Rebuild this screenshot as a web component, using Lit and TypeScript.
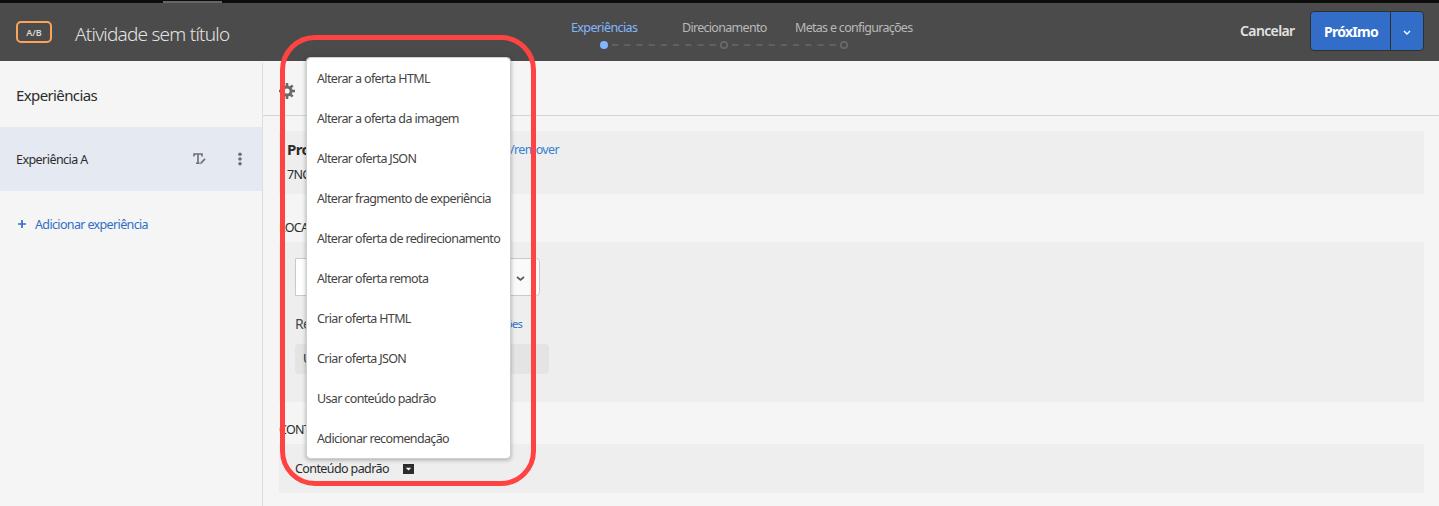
import { LitElement, html, css, svg } from "lit";
import { customElement, state } from "lit/decorators.js";

const MENU = [
  "Alterar a oferta HTML",
  "Alterar a oferta da imagem",
  "Alterar oferta JSON",
  "Alterar fragmento de experiência",
  "Alterar oferta de redirecionamento",
  "Alterar oferta remota",
  "Criar oferta HTML",
  "Criar oferta JSON",
  "Usar conteúdo padrão",
  "Adicionar recomendação",
];

const TEETH = [0, 45, 90, 135, 180, 225, 270, 315];

@customElement("app-header")
export class AppHeader extends LitElement {
  static styles = css`
    :host { display: block; height: 61px; color: #e3e3e3; background: #4b4b4b; }
    * { box-sizing: border-box; }
    .strip { height: 3px; background: #0d0d0d; padding: 1px 0 0 163px; }
    .tab { width: 59px; height: 2px; background: #666; }
    .bar { display: flex; height: 58px; align-items: flex-start; }
    .badge {
      margin: 18px 0 0 16px; width: 36px; height: 22px; border: 2px solid #f9a456; border-radius: 5px;
      font-size: 9px; font-weight: 600; line-height: 19px; text-align: center; color: #d8d8d8;
    }
    .title { margin: 17px 0 0 23px; width: 473px; font-size: 19px; font-weight: 300; line-height: 28px; letter-spacing: -0.77px; white-space: nowrap; }
    .steps { width: 380px; margin-top: 16px; }
    .labels { display: flex; font-size: 12.5px; line-height: 18px; color: #b9b9b9; margin-left: 23px; }
    .labels span { white-space: nowrap; letter-spacing: -0.7px; }
    .labels .s1 { width: 111px; color: #82b8fb; letter-spacing: -0.62px; }
    .s2 { width: 113px; }
    .track { display: block; margin: 3px 0 0 48px; }
    .cancel { margin: 18px 0 0 312px; width: 70px; font-size: 14px; font-weight: 600; line-height: 20px; letter-spacing: -0.62px; }
    .split {
      display: flex; margin-top: 8px; width: 114px; height: 40px; border: 1px solid #2f2f2f; border-radius: 4px;
      background: #326ec8; color: #fff;
    }
    .next { width: 80px; border-right: 1px solid #2f2f2f; padding-left: 13px; font-size: 14px; font-weight: 700; line-height: 40px; letter-spacing: -0.72px; }
    .more { flex: 1; display: flex; align-items: center; justify-content: center; padding-top: 3px; }
  `;
  render() {
    return html`
      <div class="strip"><div class="tab"></div></div>
      <div class="bar">
        <div class="badge">A/B</div>
        <div class="title">Atividade sem título</div>
        <div class="steps">
          <div class="labels"><span class="s1">Experiências</span><span class="s2">Direcionamento</span><span>Metas e configurações</span></div>
          <svg class="track" width="256" height="10" viewBox="0 0 256 10">
            <path d="M16 5H120M136 5H240" stroke="#696969" stroke-width="1.6" stroke-dasharray="6.2 6"/>
            <circle cx="8" cy="5" r="4" fill="#82b8fb"/>
            <circle cx="128" cy="5" r="3.2" fill="none" stroke="#696969" stroke-width="1.7"/>
            <circle cx="248" cy="5" r="3.2" fill="none" stroke="#696969" stroke-width="1.7"/>
          </svg>
        </div>
        <div class="cancel">Cancelar</div>
        <div class="split">
          <div class="next">PróxImo</div>
          <div class="more"><svg width="8" height="6" viewBox="0 0 8 6"><path d="M1 1l3 3 3-3" fill="none" stroke="#fff" stroke-width="1.4"/></svg></div>
        </div>
      </div>`;
  }
}

@customElement("app-root")
export class AppRoot extends LitElement {
  @state() private items = MENU;

  static styles = css`
    :host {
      display: block; position: relative; width: 1439px; height: 506px; overflow: hidden;
      background: #f5f5f5; color: #2c2c2c; font-family: "Noto Sans", "Open Sans", sans-serif;
    }
    * { box-sizing: border-box; }
    .body { display: flex; height: 445px; padding-top: 2px; white-space: nowrap; }
    .side { width: 263px; border-right: 1px solid #dedede; }
    h2 { margin: 0; padding: 20px 0 0 16px; height: 64px; font-size: 15px; font-weight: 400; line-height: 24px; letter-spacing: -0.62px; }
    .exp { display: flex; align-items: center; height: 64px; padding-left: 16px; background: #e5eaf2; font-size: 12.5px; letter-spacing: -0.55px; }
    .exp-name { width: 177px; }
    .exp-edit { display: block; width: 14px; margin-right: 30px; }
    .add { display: flex; align-items: center; gap: 9px; height: 66px; padding-left: 18px; color: #326ec8; font-size: 12.5px; letter-spacing: -0.64px; }
    .main { flex: 1; font-size: 12.5px; letter-spacing: -0.65px; }
    .tools { height: 53px; border-bottom: 1px solid #d5d5d5; padding: 20px 0 0 16px; }
    .content { padding: 15px 15px 0 16px; }
    .card { background: #eee; }
    .prop { height: 63px; padding: 7px 0 0 8px; }
    .row { display: flex; align-items: center; }
    .prop-head { height: 22px; }
    .prop-name { width: 223px; font-size: 15px; font-weight: 700; }
    .link { color: #3680d0; }
    .prop-id { line-height: 30px; }
    .label { height: 48px; padding-top: 25px; line-height: 18px; }
    .label-b { height: 42px; padding-top: 19px; }
    .loc { height: 160px; padding: 16px 0 0 16px; }
    .select { display: flex; width: 245px; height: 38px; border: 1px solid #c9c9c9; border-radius: 0 4px 4px 0; background: #fff; }
    .select-text { width: 207px; }
    .select-btn { flex: 1; display: flex; align-items: center; justify-content: center; background: #fafafa; border-radius: 0 4px 4px 0; padding: 3px 1px 0 0; }
    .refine { height: 48px; padding-top: 6px; }
    .refine-name { width: 211px; font-size: 14px; color: #4b4b4b; }
    .refine-link { font-size: 11px; color: #326ec8; }
    .chip { width: 254px; height: 30px; border-radius: 4px; background: #e4e4e4; padding-left: 8px; line-height: 30px; }
    .offer { height: 49px; padding: 0 0 0 16px; gap: 14px; letter-spacing: -0.6px; }
    .menu {
      position: absolute; left: 306px; top: 57px; width: 205px; height: 402px; border: 1px solid #cfcfcf; border-radius: 4px;
      background: #fff; background-clip: padding-box; box-shadow: 0 1px 4px rgba(0, 0, 0, 0.3);
    }
    .item { height: 40px; padding-left: 10px; line-height: 41px; font-size: 12.5px; letter-spacing: -0.64px; color: #444; white-space: nowrap; }
    .frame { position: absolute; left: 280px; top: 35px; width: 256px; height: 451px; border: 5px solid #ff4343; border-radius: 35px; pointer-events: none; }
    svg { display: block; }
  `;

  render() {
    return html`
      <app-header></app-header>
      <div class="body">
        <div class="side">
          <h2>Experiências</h2>
          <div class="exp">
            <span class="exp-name">Experiência A</span>
            <svg class="exp-edit" width="14" height="14" viewBox="0 0 14 14" fill="none" stroke="#6e6e6e">
              <path d="M1 4.4V2H9V4.4M5 2V11M3 11.2H7" stroke-width="1.6"/>
              <path d="M6.4 12.8l.8-2.6L11.4 6l1.6 1.6-4.2 4.2z" fill="#6e6e6e" stroke="#e5eaf2" stroke-width=".7"/>
            </svg>
            <svg width="6" height="14" viewBox="0 0 6 14" fill="#6e6e6e"><circle cx="3" cy="2.3" r="1.8"/><circle cx="3" cy="7" r="1.8"/><circle cx="3" cy="11.7" r="1.8"/></svg>
          </div>
          <div class="add">
            <svg width="8" height="8" viewBox="0 0 8 8"><path d="M4 0V8M0 4H8" stroke="#326ec8" stroke-width="1.7"/></svg>
            <span>Adicionar experiência</span>
          </div>
        </div>
        <div class="main">
          <div class="tools">
            <svg width="16" height="16" viewBox="0 0 16 16">
              ${TEETH.map((a) => svg`<rect x="6.7" y="0" width="2.6" height="4" fill="#6a6a6a" transform="rotate(${a} 8 8)"/>`)}
              <circle cx="8" cy="8" r="4.1" fill="none" stroke="#6a6a6a" stroke-width="3"/>
            </svg>
          </div>
          <div class="content">
            <div class="card prop">
              <div class="row prop-head"><span class="prop-name">Pro</span><span class="link">/remover</span></div>
              <div class="prop-id">7NC</div>
            </div>
            <div class="label">LOCA</div>
            <div class="card loc">
              <div class="select">
                <div class="select-text"></div>
                <div class="select-btn"><svg width="9" height="6" viewBox="0 0 9 6"><path d="M1 1l3.5 3L8 1" fill="none" stroke="#5a5a5a" stroke-width="1.7"/></svg></div>
              </div>
              <div class="row refine"><span class="refine-name">Re</span><span class="refine-link">ões</span></div>
              <div class="chip">U</div>
            </div>
            <div class="label label-b">CONT</div>
            <div class="card row offer">
              <span>Conteúdo padrão</span>
              <svg width="11" height="10" viewBox="0 0 11 10"><rect width="11" height="10" fill="#2c2c2c"/><path d="M2.8 3.8h5.4L5.5 6.6z" fill="#fff"/></svg>
            </div>
          </div>
        </div>
      </div>
      <div class="menu">${this.items.map((t) => html`<div class="item">${t}</div>`)}</div>
      <div class="frame"></div>`;
  }
}
